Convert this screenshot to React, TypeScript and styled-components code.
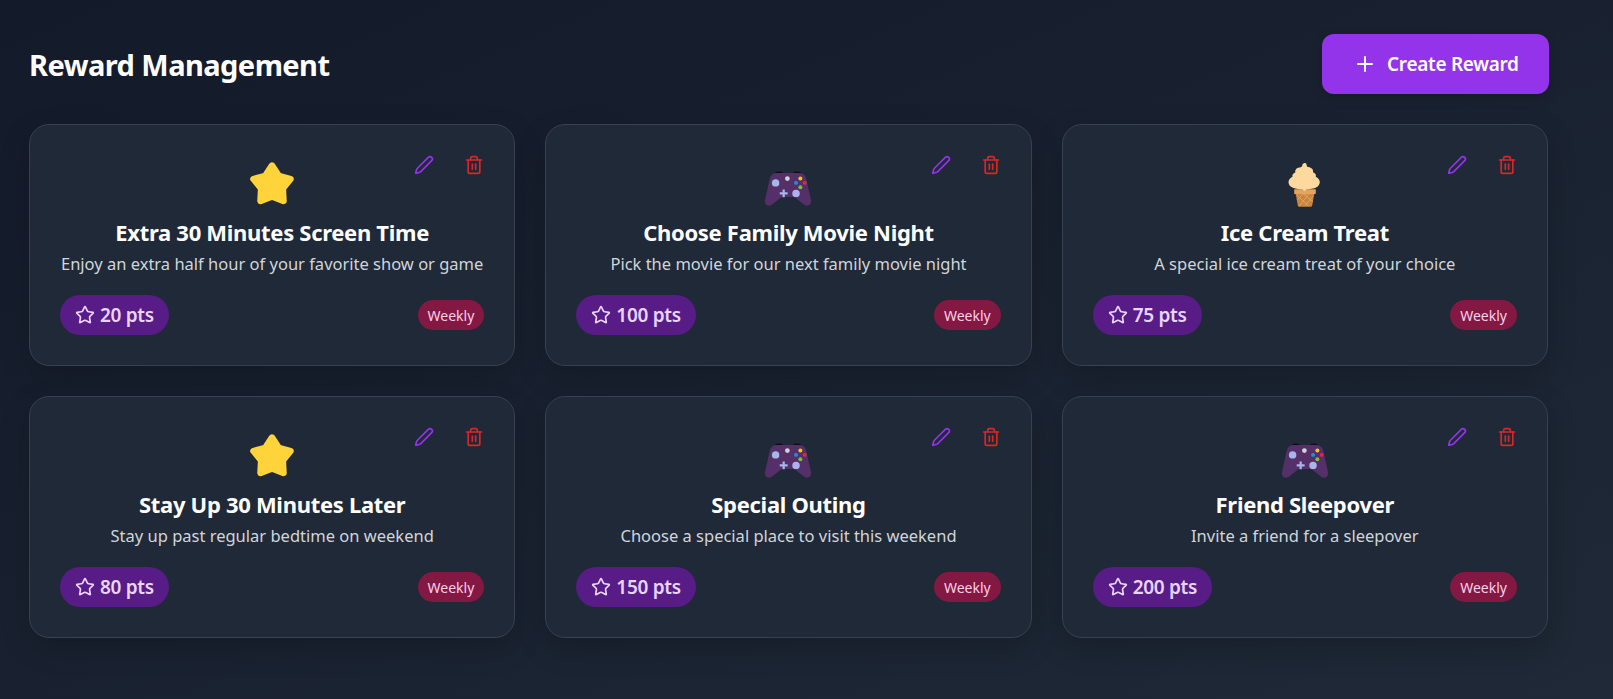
import React from "react";
import styled, { createGlobalStyle } from "styled-components";
import { Pen, Plus, Star, Trash2 } from "lucide-react";

const Global = createGlobalStyle`
  * { box-sizing: border-box; }
  html, body { margin: 0; padding: 0; height: 100%; }
  body {
    font-family: "Noto Sans", "Open Sans", sans-serif;
    background: linear-gradient(to bottom right, #131a2a 0%, #1f2937 100%);
    color: #fff;
    overflow: hidden;
  }
`;

const Page = styled.main`
  height: 699px;
  padding: 34px 65px 0 29px;
`;

const Header = styled.header`
  display: flex;
  align-items: center;
  justify-content: space-between;
  margin-bottom: 30px;
`;

const Title = styled.h1`
  margin: 0;
  font-size: 29px;
  font-weight: 700;
  letter-spacing: -0.55px;
`;

const CreateButton = styled.button`
  display: flex;
  align-items: center;
  gap: 10px;
  width: 227px;
  height: 60px;
  margin-right: -1px;
  padding: 0 28px 0 31px;
  border: 0;
  border-radius: 12px;
  background: #9333ea;
  color: #fff;
  font: 600 19px "Noto Sans", sans-serif;
  letter-spacing: -0.3px;
  white-space: nowrap;
  box-shadow: 0 4px 12px rgba(0, 0, 0, 0.2);
`;

const Grid = styled.section`
  display: grid;
  grid-template-columns: repeat(3, 1fr);
  gap: 30px;
`;

const Card = styled.article`
  position: relative;
  height: 242px;
  padding: 30px;
  border: 1px solid #374151;
  border-radius: 20px;
  background: #1f2937;
  box-shadow: 0 10px 30px rgba(0, 0, 0, 0.2);
  display: flex;
  flex-direction: column;
  align-items: center;
`;

const Actions = styled.div`
  position: absolute;
  top: 30px;
  right: 30px;
  display: flex;
  gap: 30px;
`;

const ActionButton = styled.span<{ $color: string }>`
  display: flex;
  color: ${(p) => p.$color};
`;

const IconBox = styled.div`
  height: 52px;
  display: flex;
  align-items: center;
  justify-content: center;
  margin-top: 3px;
`;

const CardTitle = styled.h2`
  margin: 7px 0 0;
  font-size: 22px;
  line-height: 30px;
  font-weight: 700;
  text-align: center;
  letter-spacing: -0.3px;
`;

const Description = styled.p`
  margin: 4px 0 0;
  font-size: 16.5px;
  line-height: 26px;
  color: #d1d5db;
  text-align: center;
`;

const Footer = styled.div`
  margin-top: auto;
  width: 100%;
  display: flex;
  align-items: center;
  justify-content: space-between;
`;

const Points = styled.span`
  display: inline-flex;
  align-items: center;
  gap: 5px;
  height: 40px;
  padding: 0 15px;
  border-radius: 20px;
  background: #581c87;
  color: #e9d5ff;
  font-size: 19px;
  font-weight: 600;
  letter-spacing: -0.3px;
`;

const Frequency = styled.span`
  display: inline-flex;
  align-items: center;
  height: 30px;
  padding: 0 10px;
  border-radius: 15px;
  background: #831843;
  color: #fbcfe8;
  font-size: 14px;
`;

const StarArt = () => (
  <svg width="52" height="52" viewBox="0 0 48 48">
    <path
      fill="#ffd43b"
      stroke="#ffd43b"
      strokeWidth="6"
      strokeLinejoin="round"
      d="M24 7l6.200 9.500 10.900 2.900-7.100 8.800.6 11.400-10.600-4.100-10.600 4.100.6-11.400-7.100-8.800 10.900-2.900z"
    />
  </svg>
);

const GamepadArt = () => (
  <svg width="52" height="52" viewBox="3 -1.600 42 42">
    <path fill="#0d0d12" d="M14 9.800c1.500-.7 4-.7 5.500 0v1.500H14zM28.500 9.800c1.500-.7 4-.7 5.500 0v1.500h-5.500z" />
    <path
      fill="#553068"
      d="M15 10.500h18c3 0 5 1.500 5.700 4.500l3.800 17c.5 3-.8 5-3 5-1.500 0-2.500-.8-4-2l-5-4c-1-.7-1.700-1-3-1H20.500c-1.300 0-2 .3-3 1l-5 4c-1.500 1.200-2.500 2-4 2-2.200 0-3.500-2-3-5l3.800-17c.7-3 2.700-4.500 5.700-4.500z"
    />
    <circle cx="14" cy="18.500" r="3" fill="#a9b4ea" />
    <circle cx="30.500" cy="27" r="3" fill="#a9b4ea" />
    <path stroke="#a9b4ea" strokeWidth="1.800" d="M20.500 23.800v6.400M17.300 27h6.400" />
    <circle cx="23.500" cy="15" r="1.900" fill="#d5d0dc" />
    <circle cx="34" cy="15" r="1.600" fill="#f5c518" />
    <circle cx="30.500" cy="18.500" r="1.600" fill="#1793d9" />
    <circle cx="37.500" cy="18.500" r="1.600" fill="#e8282e" />
    <circle cx="34" cy="22" r="1.600" fill="#7cc12f" />
  </svg>
);

const ConeArt = () => (
  <svg width="52" height="52" viewBox="0 0 48 48">
    <g transform="translate(-1.200 2.800) scale(1.05 .9)">
      <path fill="#c9853f" d="M15.500 32h17l-2.200 13.500c-.2 1-.8 1.500-1.800 1.500h-9c-1 0-1.600-.5-1.800-1.500z" />
      <path
        stroke="#e2a867"
        strokeWidth=".8"
        fill="none"
        d="M17 35l10 11M22 33l9 9M28 33l-9 13M31 36l-7 10M17 40l6-7"
      />
      <path
        fill="#e5a35c"
        d="M14.500 29h19v4.500c-2.500 1-4 .5-5 .5-2 0-2.500-.5-4.500 1-2-1.500-3-1-4.500-1-1 0-3 .5-5-.5z"
      />
      <path
        fill="#fdd9a0"
        d="M24 2c1 0 1.500 1 1.500 2.500 0 1 1 1.500 2.500 2 2.500 1 3.500 3 3 5 2 .7 3 2.500 2.500 4.500 2 1 3.500 3 3.500 5.500 0 3-2 5.500-5 6.500-2.500.8-5 1-7 1.200-.5 1-1 1.500-1.500 1.500s-1-.5-1.500-1.500c-3-.2-6-.5-8-1.500-3-1.200-4.500-3.500-4.500-6 0-2.500 1.500-4.500 3.500-5.500-.5-2 .5-3.800 2.500-4.500-.5-2.500 1-4.500 3.500-5 2-.5 3-1.500 2.700-3.500C22.500 2.700 23 2 24 2z"
      />
    </g>
  </svg>
);

const rewards = [
  { art: <StarArt />, title: "Extra 30 Minutes Screen Time", text: "Enjoy an extra half hour of your favorite show or game", pts: 20 },
  { art: <GamepadArt />, title: "Choose Family Movie Night", text: "Pick the movie for our next family movie night", pts: 100 },
  { art: <ConeArt />, title: "Ice Cream Treat", text: "A special ice cream treat of your choice", pts: 75 },
  { art: <StarArt />, title: "Stay Up 30 Minutes Later", text: "Stay up past regular bedtime on weekend", pts: 80 },
  { art: <GamepadArt />, title: "Special Outing", text: "Choose a special place to visit this weekend", pts: 150 },
  { art: <GamepadArt />, title: "Friend Sleepover", text: "Invite a friend for a sleepover", pts: 200 },
];

export default function App() {
  return (
    <>
      <Global />
      <Page>
        <Header>
          <Title>Reward Management</Title>
          <CreateButton>
            <Plus size={24} strokeWidth={2} />
            Create Reward
          </CreateButton>
        </Header>
        <Grid>
          {rewards.map((r) => (
            <Card key={r.title}>
              <Actions>
                <ActionButton $color="#9333ea"><Pen size={20} /></ActionButton>
                <ActionButton $color="#dc2626"><Trash2 size={20} /></ActionButton>
              </Actions>
              <IconBox>{r.art}</IconBox>
              <CardTitle>{r.title}</CardTitle>
              <Description>{r.text}</Description>
              <Footer>
                <Points><Star size={20} />{r.pts} pts</Points>
                <Frequency>Weekly</Frequency>
              </Footer>
            </Card>
          ))}
        </Grid>
      </Page>
    </>
  );
}
